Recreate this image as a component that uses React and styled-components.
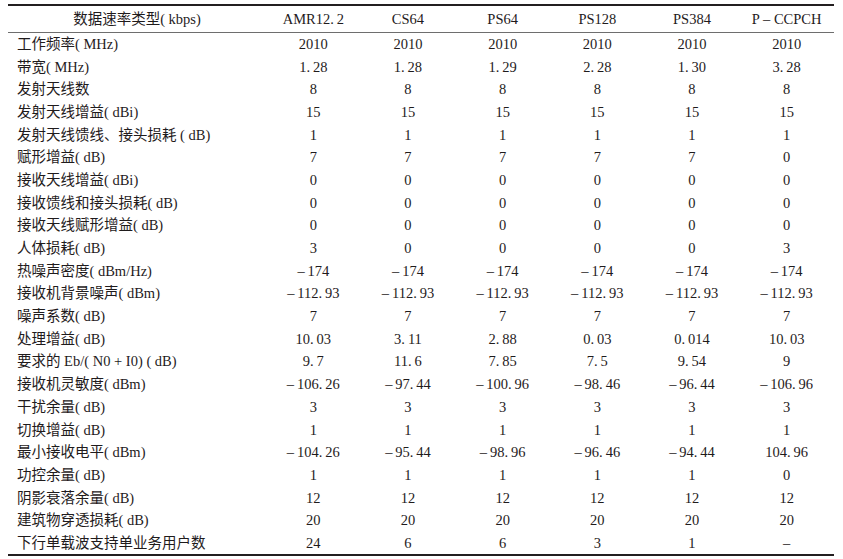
import React from "react";
import styled, { createGlobalStyle } from "styled-components";

const GlobalStyle = createGlobalStyle`
  html, body {
    margin: 0;
    padding: 0;
    background: #ffffff;
  }
`;

const COLS = "258px repeat(6, 1fr)";

const StPage = styled.div`
  width: 843px;
  height: 559px;
  padding: 4px 9px 0 8px;
  box-sizing: border-box;
  background: #ffffff;
  font-family: "Liberation Serif", "Noto Sans CJK SC", serif;
  font-size: 14.5px;
  color: #1f1b1c;
`;

const StTable = styled.section`
  display: flex;
  flex-direction: column;
  border-top: 2px solid #231f20;
  border-bottom: 2px solid #231f20;
`;

const StHeadRow = styled.div`
  display: grid;
  grid-template-columns: ${COLS};
  align-items: center;
  height: 26px;
  border-bottom: 1.5px solid #6e6e6e;
`;

const StRow = styled.div`
  display: grid;
  grid-template-columns: ${COLS};
  align-items: center;
  height: 22.68px;
`;

const StCell = styled.div`
  white-space: pre;
  line-height: 1;
  text-align: ${({ $align }) => $align || "center"};
  padding-left: ${({ $align }) => ($align === "left" ? "9px" : "0")};
`;

// journal style: en dash with a thin gap, and a gap after the decimal point
const D = "\u2013\u2009";
const n = (s) => s.replace(". ", ".\u2009");

const headers = ["AMR12. 2", "CS64", "PS64", "PS128", "PS384", "P \u2013 CCPCH"];

const same = (v) => Array(6).fill(v);

const rows = [
  ["工作频率( MHz)", same("2010")],
  ["带宽( MHz)", ["1. 28", "1. 28", "1. 29", "2. 28", "1. 30", "3. 28"]],
  ["发射天线数", same("8")],
  ["发射天线增益( dBi)", same("15")],
  ["发射天线馈线、接头损耗 ( dB)", same("1")],
  ["赋形增益( dB)", ["7", "7", "7", "7", "7", "0"]],
  ["接收天线增益( dBi)", same("0")],
  ["接收馈线和接头损耗( dB)", same("0")],
  ["接收天线赋形增益( dB)", same("0")],
  ["人体损耗( dB)", ["3", "0", "0", "0", "0", "3"]],
  ["热噪声密度( dBm/Hz)", same(D + "174")],
  ["接收机背景噪声( dBm)", same(D + "112. 93")],
  ["噪声系数( dB)", same("7")],
  ["处理增益( dB)", ["10. 03", "3. 11", "2. 88", "0. 03", "0. 014", "10. 03"]],
  ["要求的 Eb/( N0 + I0) ( dB)", ["9. 7", "11. 6", "7. 85", "7. 5", "9. 54", "9"]],
  [
    "接收机灵敏度( dBm)",
    [D + "106. 26", D + "97. 44", D + "100. 96", D + "98. 46", D + "96. 44", D + "106. 96"],
  ],
  ["干扰余量( dB)", same("3")],
  ["切换增益( dB)", same("1")],
  [
    "最小接收电平( dBm)",
    [D + "104. 26", D + "95. 44", D + "98. 96", D + "96. 46", D + "94. 44", "104. 96"],
  ],
  ["功控余量( dB)", ["1", "1", "1", "1", "1", "0"]],
  ["阴影衰落余量( dB)", same("12")],
  ["建筑物穿透损耗( dB)", same("20")],
  ["下行单载波支持单业务用户数", ["24", "6", "6", "3", "1", "\u2013"]],
];

const App = () => {
  return (
    <StPage>
      <GlobalStyle />
      <StTable>
        <StHeadRow>
          <StCell>数据速率类型( kbps)</StCell>
          {headers.map((h) => (
            <StCell key={h}>{n(h)}</StCell>
          ))}
        </StHeadRow>
        {rows.map(([label, values], index) => (
          <StRow key={index}>
            <StCell $align="left">{label}</StCell>
            {values.map((v, i) => (
              <StCell key={i}>{n(v)}</StCell>
            ))}
          </StRow>
        ))}
      </StTable>
    </StPage>
  );
};

export default App;
